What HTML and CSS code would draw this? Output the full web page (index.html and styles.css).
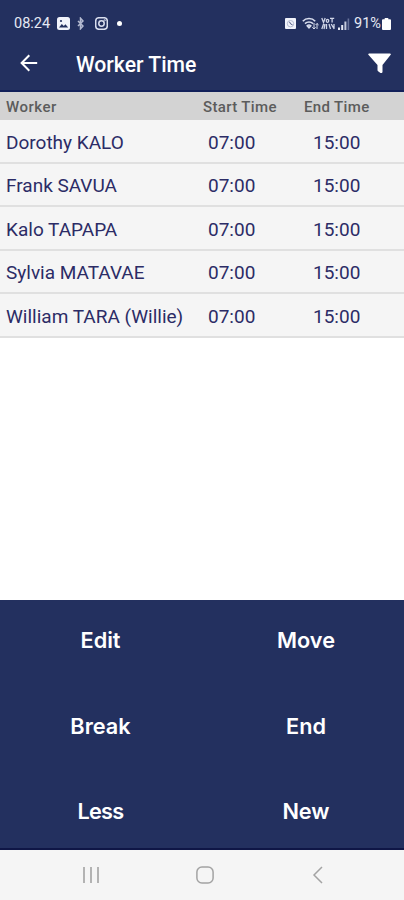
FILE: index.html
```html
<!DOCTYPE html>
<html lang="en">
<head>
    <meta charset="UTF-8">
    <meta name="viewport" content="width=device-width, initial-scale=1.0">
    <title>Worker Time</title>
    <link rel="stylesheet" href="styles.css">
</head>
<body>
    <!-- Phone status bar -->
    <div class="status-bar">
        <span class="clock">08:24</span>
        <svg class="icon-picture" width="13" height="13" viewBox="0 0 13 13">
            <rect width="13" height="13" rx="2.5" fill="#f1f3fb"/>
            <path d="M2 10.5l2.8-3.6 2 2.2 1.6-1.8 2.8 3.2z" fill="#23305f"/>
            <circle cx="4" cy="4" r="1.1" fill="#23305f"/>
        </svg>
        <svg class="icon-bluetooth" width="7" height="13" viewBox="0 0 7 13" fill="none" stroke="#b4bad0" stroke-width="1.5">
            <path d="M1 4l5 5-2.5 2.8V1.2L6 4 1 9"/>
        </svg>
        <svg class="icon-camera" width="13" height="13" viewBox="0 0 13 13" fill="none" stroke="#d9deee" stroke-width="1.5">
            <rect x="0.7" y="0.7" width="11.6" height="11.6" rx="3.2"/>
            <circle cx="6.5" cy="6.5" r="2.7"/>
            <circle cx="9.7" cy="3.3" r="0.3"/>
        </svg>
        <span class="dot"></span>
        <div class="status-right">
            <svg width="11" height="11" viewBox="0 0 11 11">
                <rect width="11" height="11" rx="1" fill="#f1f3fb"/>
                <circle cx="5.5" cy="5.7" r="3.2" fill="none" stroke="#b3bad0" stroke-width="1"/>
                <path d="M4.5 3.8l1 2 2 1" fill="none" stroke="#4b5680" stroke-width="1"/>
            </svg>
            <svg class="icon-wifi" width="17" height="13" viewBox="0 0 17 13" fill="none" stroke="#d9deee" stroke-width="1.6">
                <path d="M0.8 4.2C4 0.6 10 0.6 13.2 4.2M3 6.6c2.2-2.2 5.8-2.2 8 0M5.2 8.8c1-1 2.6-1 3.6 0L7 10.8z"/>
                <path d="M12 6v6M10.3 10.3L12 12l1.6-1.7M15 12V6.5M13.5 8L15 6.5 16.6 8" stroke-width="1"/>
            </svg>
            <svg class="icon-volte" width="14" height="13" viewBox="0 0 14 13" fill="none" stroke="#d0d5e7" stroke-width="1.3">
                <path d="M0.8 1l1.7 4.5L4.2 1M5.3 3.8a1.2 1.5 0 1 0 2.4 0 1.2 1.5 0 1 0-2.4 0M9 1.3h4.2M11.1 1.3v4.2"/>
                <path d="M0.8 12l1.8-5M4 7l-1 5M5.5 7v5M8 7l1.5 5M10.2 7l3 5M13 7v5"/>
            </svg>
            <svg class="icon-signal" width="12" height="12" viewBox="0 0 12 12">
                <path d="M0 12V9.5h2V12zM3.2 12V7h2v5z" fill="#e6e9f4"/>
                <path d="M6.4 12V3.5h2V12z" fill="#c4cadd"/>
                <path d="M9.6 12V0.5h1.6V12z" fill="#68739b"/>
            </svg>
            <span class="battery-level">91%</span>
            <svg width="9" height="12" viewBox="0 0 9 12" fill="#fff">
                <path d="M2.7 0h3.6v1.3H8a1 1 0 0 1 1 1V11a1 1 0 0 1-1 1H1a1 1 0 0 1-1-1V2.3a1 1 0 0 1 1-1h1.7z"/>
            </svg>
        </div>
    </div>

    <!-- App header -->
    <header class="app-bar">
        <svg width="18" height="18" viewBox="0 0 18 18" fill="none" stroke="#fff" stroke-width="2">
            <path d="M17.2 9H2M9.3 1.3L1.6 9l7.7 7.7"/>
        </svg>
        <h1>Worker Time</h1>
        <svg class="filter" width="23" height="21" viewBox="0 0 23 21" fill="#fff">
            <path d="M1 0.5h21a0.8 0.8 0 0 1 .7 1.3L14.5 12v6.8a1.3 1.3 0 0 1-2 1.1l-2.4-1.6a1.5 1.5 0 0 1-.6-1.2V12L0.4 1.8A0.8 0.8 0 0 1 1 0.5z"/>
        </svg>
    </header>

    <!-- Worker list -->
    <main>
        <table class="worker-table">
            <thead>
                <tr><th class="worker">Worker</th><th class="start">Start Time</th><th>End Time</th></tr>
            </thead>
            <tbody>
                <tr><td>Dorothy KALO</td><td>07:00</td><td>15:00</td></tr>
                <tr><td>Frank SAVUA</td><td>07:00</td><td>15:00</td></tr>
                <tr><td>Kalo TAPAPA</td><td>07:00</td><td>15:00</td></tr>
                <tr><td>Sylvia MATAVAE</td><td>07:00</td><td>15:00</td></tr>
                <tr><td>William TARA (Willie)</td><td>07:00</td><td>15:00</td></tr>
            </tbody>
        </table>
    </main>

    <!-- Action buttons -->
    <div class="actions">
        <button>Edit</button>
        <button>Move</button>
        <button>Break</button>
        <button>End</button>
        <button class="narrow">Less</button>
        <button>New</button>
    </div>

    <!-- Phone navigation bar -->
    <nav class="nav-bar">
        <svg width="18" height="18" viewBox="0 0 18 18" fill="none" stroke="#a3a3a3" stroke-width="1.6">
            <path d="M2 1v16M9 1v16M16 1v16"/>
        </svg>
        <svg width="18" height="18" viewBox="0 0 18 18" fill="none" stroke="#a3a3a3" stroke-width="1.5">
            <rect x="0.9" y="1" width="16.2" height="16" rx="5"/>
        </svg>
        <svg width="18" height="18" viewBox="0 0 18 18" fill="none" stroke="#a3a3a3" stroke-width="1.5">
            <path d="M13 1L5 9l8 8"/>
        </svg>
    </nav>
</body>
</html>
```
FILE: styles.css
```css
/* Global styles */
* {
    box-sizing: border-box;
}

body {
    margin: 0;
    height: 900px;
    display: flex;
    flex-direction: column;
    overflow: hidden;
    font-family: Roboto, "Liberation Sans", sans-serif;
    background-color: #fff;
}

svg {
    display: block;
    flex: none;
}

/* Status bar */
.status-bar {
    height: 36px;
    padding: 11px 13px 0 14px;
    display: flex;
    align-items: center;
    background-color: #23305f;
    color: #e6e9f4;
    font-size: 14.5px;
}

.clock {
    width: 37px;
    margin-right: 6px;
}

.icon-bluetooth {
    margin: 0 11px 0 7px;
}

.dot {
    width: 5px;
    height: 5px;
    margin-left: 9px;
    border-radius: 50%;
    background-color: #fff;
}

.status-right {
    display: flex;
    align-items: center;
    margin-left: auto;
}

.icon-wifi {
    margin-left: 6px;
}

.icon-volte {
    margin: 0 3px 0 2px;
}

.battery-level {
    width: 28px;
    margin-left: 4px;
}

/* App header */
.app-bar {
    height: 56px;
    padding: 0 13px 0 20px;
    display: flex;
    align-items: center;
    background-color: #23305f;
    border-bottom: 2px solid #12205a;
}

.app-bar h1 {
    margin: 0 0 0 38px;
    padding-top: 2px;
    color: #fff;
    font-size: 21.2px;
    font-weight: 500;
}

.filter {
    margin-left: auto;
}

/* Worker table */
main {
    flex: 1;
}

.worker-table {
    width: 100%;
    border-collapse: separate;
    border-spacing: 0;
    table-layout: fixed;
}

th {
    height: 28px;
    padding: 2px 0 0;
    text-align: left;
    font-size: 15px;
    font-weight: 500;
    letter-spacing: 0.35px;
    color: #5c5c5c;
    background-color: #d3d3d3;
}

td {
    height: 43.5px;
    padding: 3px 0 0 5px;
    font-size: 19px;
    color: #2c2c66;
    background-color: #f5f5f5;
    border-bottom: 2px solid #e0e0e0;
    white-space: nowrap;
}

.worker {
    width: 203px;
    letter-spacing: 0.5px;
}

.start {
    width: 101px;
}

th:first-child, td:first-child {
    padding-left: 6px;
}

td:last-child {
    padding-left: 9px;
}

/* Action buttons */
.actions {
    height: 250px;
    display: grid;
    grid-template-columns: 201px 210px;
    grid-template-rows: 80px 91px 79px;
    background-color: #23305f;
    border-bottom: 2px solid #0f1646;
}

button {
    padding: 0;
    border: none;
    background: none;
    color: #fff;
    font-family: Inter, "Liberation Sans", sans-serif;
    font-size: 21.7px;
    font-weight: 600;
    cursor: pointer;
}

.narrow {
    letter-spacing: -0.7px;
}

/* Navigation bar */
.nav-bar {
    height: 50px;
    padding: 0 77px 0 82px;
    display: flex;
    align-items: center;
    justify-content: space-between;
    background-color: #f5f5f5;
}
```
